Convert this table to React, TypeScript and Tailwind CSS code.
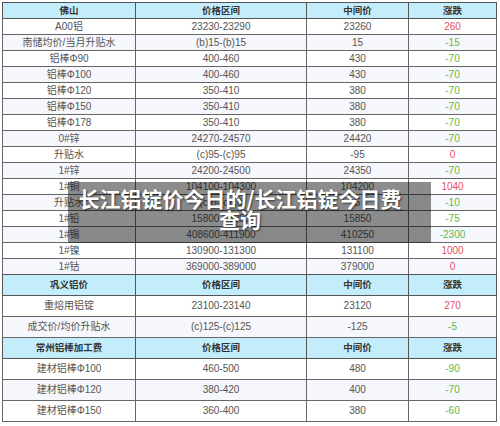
import React from "react";

type Row = [string, string, string, string];

const t1: Row[] = [
  ["A00铝", "23230-23290", "23260", "260"],
  ["南储均价/当月升贴水", "(b)15-(b)15", "15", "-15"],
  ["铝棒Φ90", "400-460", "430", "-70"],
  ["铝棒Φ100", "400-460", "430", "-70"],
  ["铝棒Φ120", "350-410", "380", "-70"],
  ["铝棒Φ150", "350-410", "380", "-70"],
  ["铝棒Φ178", "350-410", "380", "-70"],
  ["0#锌", "24270-24570", "24420", "-70"],
  ["升贴水", "(c)95-(c)95", "-95", "0"],
  ["1#锌", "24200-24500", "24350", "-70"],
  ["1#铜", "104100-104300", "104200", "1040"],
  ["升贴水", "(c)0-(c)10", "5", "-10"],
  ["1#铅", "15800-15900", "15850", "-75"],
  ["1#锡", "408600-411900", "410250", "-2300"],
  ["1#镍", "130900-131300", "131100", "1000"],
  ["1#钴", "369000-389000", "379000", "0"],
];

const t2: Row[] = [
  ["重熔用铝锭", "23100-23140", "23120", "270"],
  ["成交价/均价升贴水", "(c)125-(c)125", "-125", "-5"],
];

const t3: Row[] = [
  ["建材铝棒Φ100", "460-500", "480", "-90"],
  ["建材铝棒Φ120", "380-420", "400", "-70"],
  ["建材铝棒Φ150", "360-400", "380", "-60"],
];

function chgColor(v: string) {
  return v.startsWith("-") ? "text-[#5cb94a]" : "text-[#e4505f]";
}

function Header({ title, h }: { title: string; h: string }) {
  return (
    <tr className={`${h} bg-[#c3edfb] text-[#333] font-bold text-[9.5px]`}>
      <td className="border border-[#555] text-center">{title}</td>
      <td className="border border-[#555] text-center">价格区间</td>
      <td className="border border-[#555] text-center">中间价</td>
      <td className="border border-[#555] text-center">涨跌</td>
    </tr>
  );
}

function Body({ rows, h }: { rows: Row[]; h: string }) {
  return (
    <>
      {rows.map((r, i) => (
        <tr key={i} className={`${h} ${i % 2 === 0 ? "bg-white" : "bg-[#f6f7fc]"} text-[#555] text-[10px]`}>
          <td className="border border-[#666] text-center">{r[0]}</td>
          <td className="border border-[#666] text-center">{r[1]}</td>
          <td className="border border-[#666] text-center">{r[2]}</td>
          <td className={`border border-[#666] text-center ${chgColor(r[3])}`}>{r[3]}</td>
        </tr>
      ))}
    </>
  );
}

function Cols() {
  return (
    <colgroup>
      <col className="w-[133px]" />
      <col className="w-[171px]" />
      <col className="w-[102px]" />
      <col className="w-[88px]" />
    </colgroup>
  );
}

export default function App() {
  return (
    <div
      className="relative w-[500px] h-[426px] bg-white overflow-hidden pt-[2px] pl-[2px]"
      style={{ fontFamily: '"Liberation Sans", "Noto Sans CJK SC", sans-serif' }}
    >
      <table className="border-collapse table-fixed w-[494px] leading-none">
        <Cols />
        <tbody>
          <Header title="佛山" h="h-[16px]" />
          <Body rows={t1} h="h-[16px]" />
        </tbody>
      </table>
      <table className="border-collapse table-fixed w-[494px] leading-none -mt-px">
        <Cols />
        <tbody>
          <Header title="巩义铝价" h="h-[21px]" />
          <Body rows={t2} h="h-[21px]" />
          <Header title="常州铝棒加工费" h="h-[21px]" />
          <Body rows={t3} h="h-[21px]" />
        </tbody>
      </table>

      <div className="absolute left-[68px] top-[182px] w-[363px] h-[61px] bg-black/45 pl-[8px] pr-[27px] pt-[6px]">
        <div
          className="text-white font-bold text-[21px] leading-[21px] text-center [text-shadow:1px_1px_2px_rgba(0,0,0,0.6)]"
          style={{ fontFamily: '"Noto Sans CJK SC", sans-serif' }}
        >
          长江铝锭价今日的/长江铝锭今日费查询
        </div>
      </div>
    </div>
  );
}
